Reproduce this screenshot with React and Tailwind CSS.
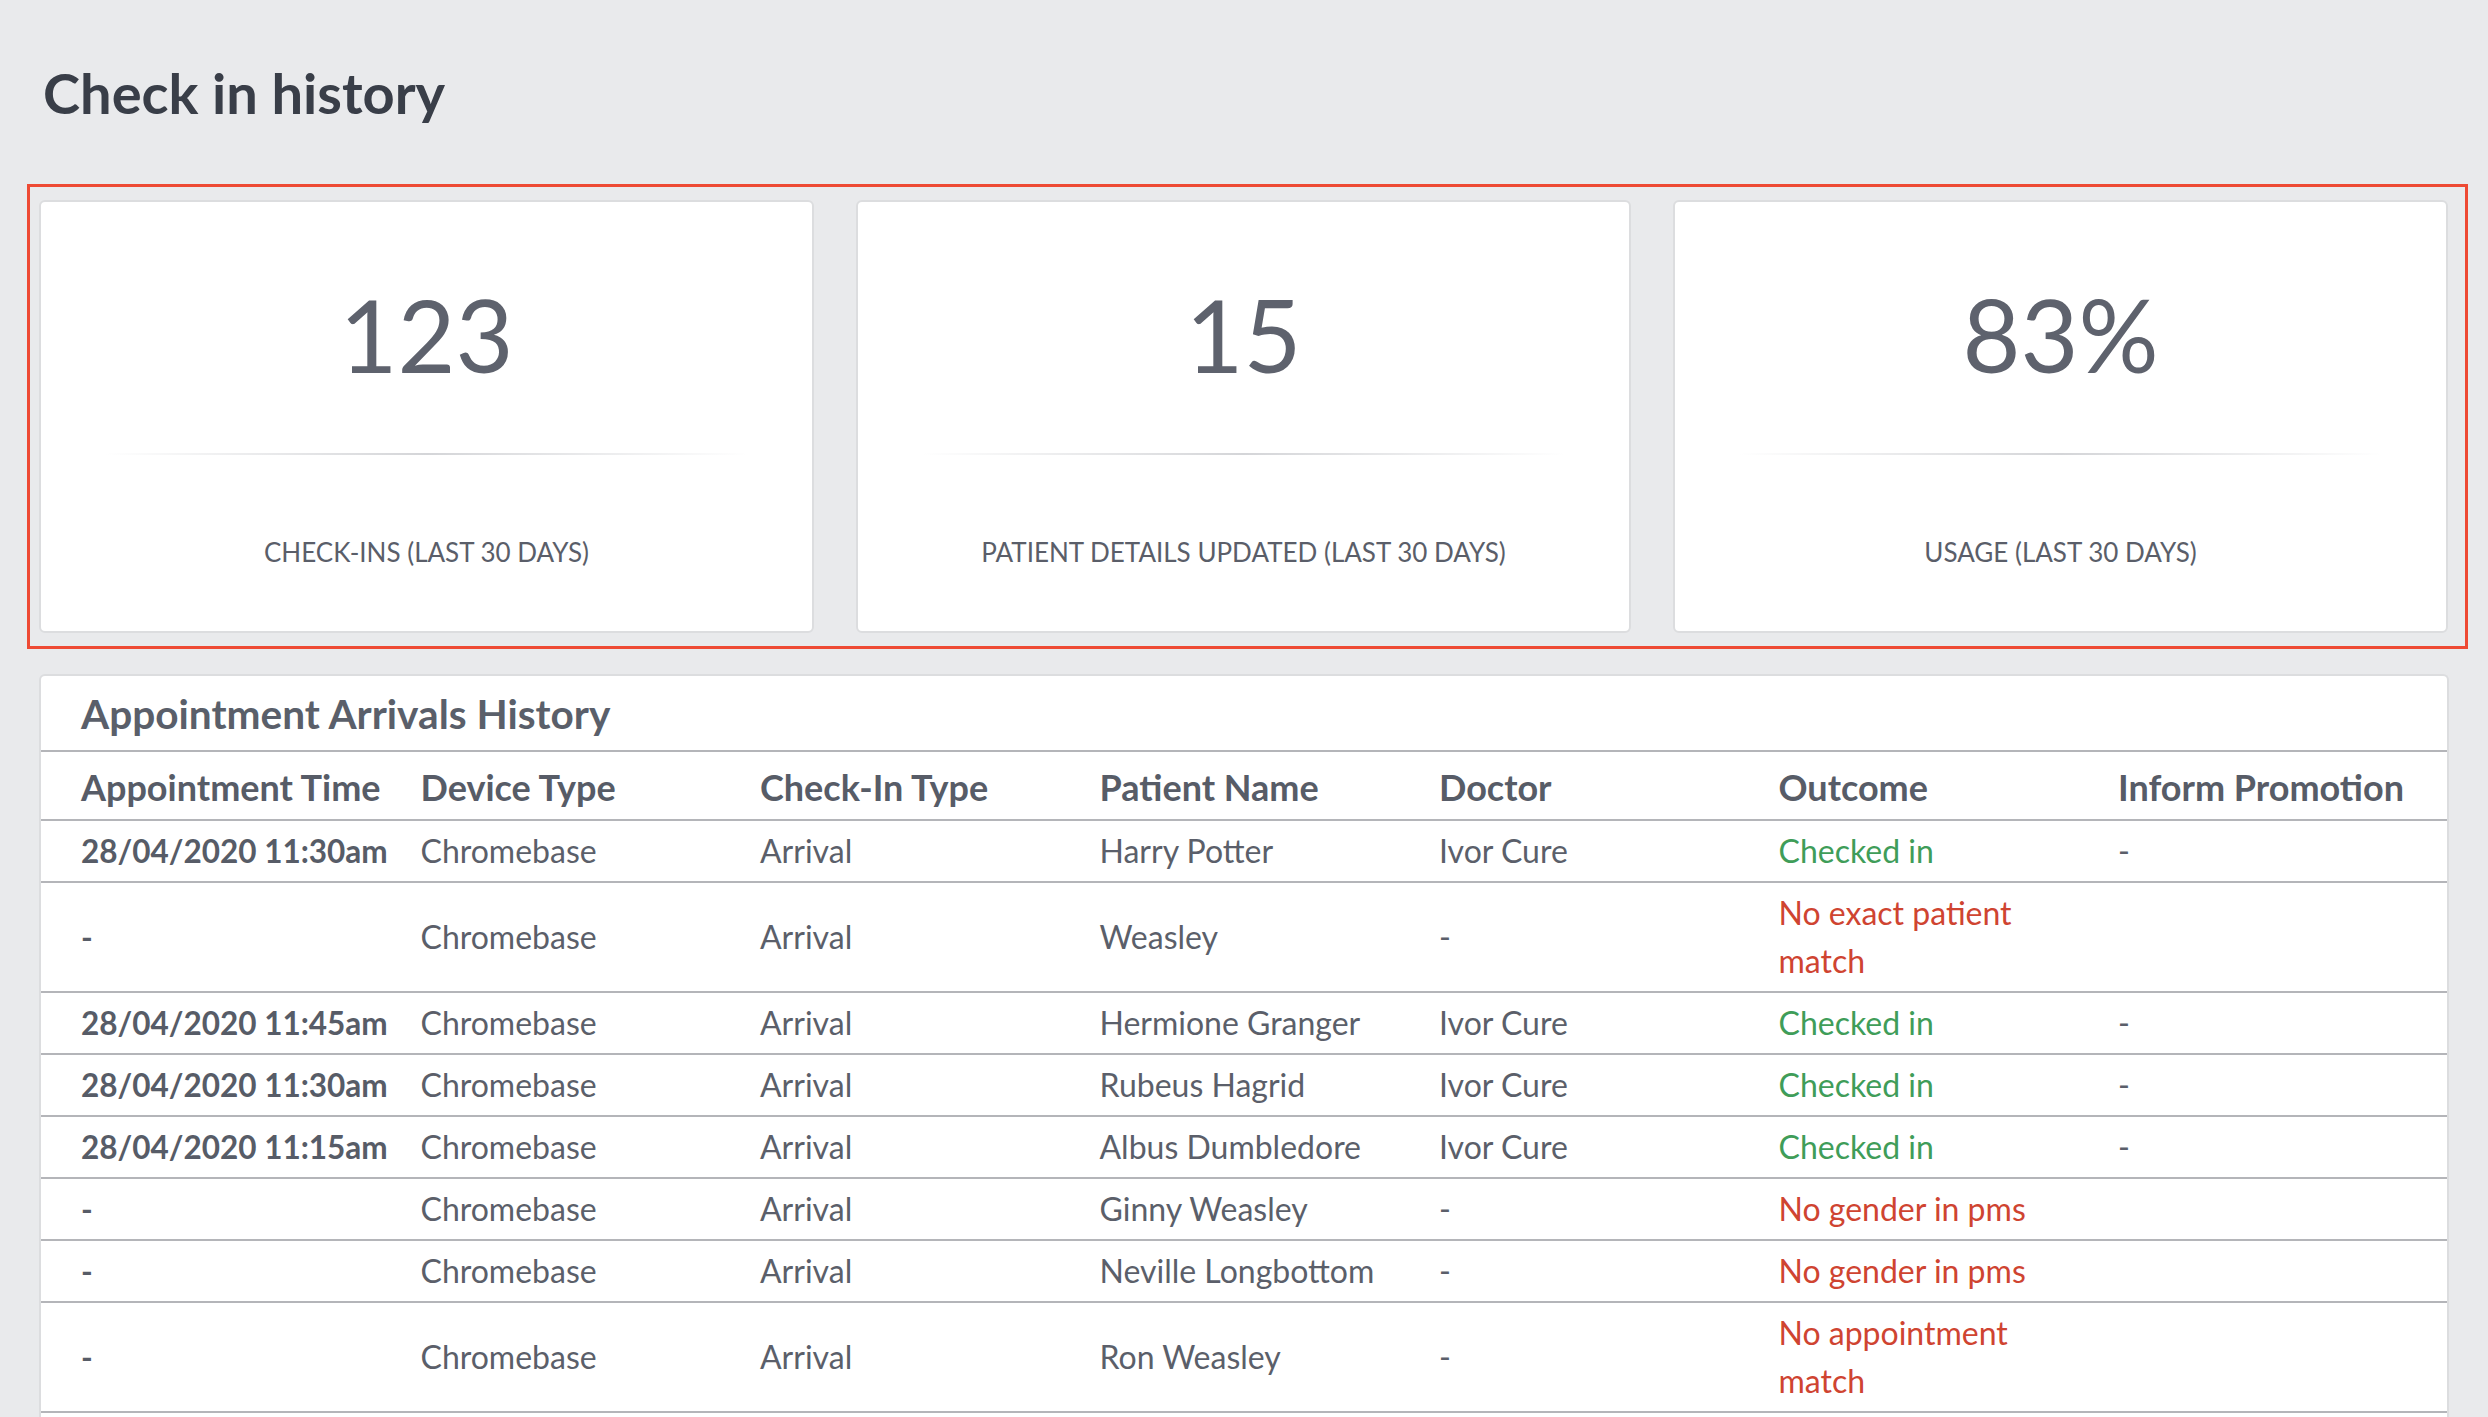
const stats = [
  { value: '123', label: 'CHECK-INS (LAST 30 DAYS)' },
  { value: '15', label: 'PATIENT DETAILS UPDATED (LAST 30 DAYS)' },
  { value: '83%', label: 'USAGE (LAST 30 DAYS)' },
]

const columns = [
  'Appointment Time',
  'Device Type',
  'Check-In Type',
  'Patient Name',
  'Doctor',
  'Outcome',
  'Inform Promotion',
]

const rows = [
  { time: '28/04/2020 11:30am', device: 'Chromebase', type: 'Arrival', patient: 'Harry Potter', doctor: 'Ivor Cure', outcome: 'Checked in', ok: true, promo: '-' },
  { time: '-', device: 'Chromebase', type: 'Arrival', patient: 'Weasley', doctor: '-', outcome: 'No exact patient match', ok: false, promo: '' },
  { time: '28/04/2020 11:45am', device: 'Chromebase', type: 'Arrival', patient: 'Hermione Granger', doctor: 'Ivor Cure', outcome: 'Checked in', ok: true, promo: '-' },
  { time: '28/04/2020 11:30am', device: 'Chromebase', type: 'Arrival', patient: 'Rubeus Hagrid', doctor: 'Ivor Cure', outcome: 'Checked in', ok: true, promo: '-' },
  { time: '28/04/2020 11:15am', device: 'Chromebase', type: 'Arrival', patient: 'Albus Dumbledore', doctor: 'Ivor Cure', outcome: 'Checked in', ok: true, promo: '-' },
  { time: '-', device: 'Chromebase', type: 'Arrival', patient: 'Ginny Weasley', doctor: '-', outcome: 'No gender in pms', ok: false, promo: '' },
  { time: '-', device: 'Chromebase', type: 'Arrival', patient: 'Neville Longbottom', doctor: '-', outcome: 'No gender in pms', ok: false, promo: '' },
  { time: '-', device: 'Chromebase', type: 'Arrival', patient: 'Ron Weasley', doctor: '-', outcome: 'No appointment match', ok: false, promo: '' },
]

function StatCard({ value, label }) {
  return (
    <div className="h-[433px] bg-white border-2 border-[#dcdddf] rounded-md flex flex-col items-stretch">
      <div className="mt-[82px] text-center text-[100px] leading-none text-[#5e626d]">{value}</div>
      <div className="mt-[69px] mx-[64px] h-[2px] bg-linear-to-r from-transparent via-[#d4d5d8] to-transparent" />
      <div className="mt-[84px] text-center text-[26px] leading-none text-[#5a5e69]">{label}</div>
    </div>
  )
}

export default function App() {
  return (
    <div className="min-h-screen bg-[#e9eaec] font-['Lato','Liberation_Sans',sans-serif] pt-[59px] pb-0 overflow-hidden">
      <h1 className="ml-[43px] text-[56px] leading-[1.2] font-bold text-[#393e48]">Check in history</h1>

      {/* Stats */}
      <div className="mt-[58px] ml-[27px] mr-[20px] border-[3px] border-[#ee4a34] pl-[9px] pr-[17px] py-[13px]">
        <div className="grid grid-cols-3 gap-[42px]">
          {stats.map((s) => (
            <StatCard key={s.label} value={s.value} label={s.label} />
          ))}
        </div>
      </div>

      {/* Arrivals table */}
      <div className="mt-[25px] mx-[39px] bg-white border-2 border-b-0 border-[#dcdddf] rounded-t-md pb-[20px]">
        <h2 className="pl-[40px] h-[76px] pt-[3px] flex items-center text-[40.6px] font-bold text-[#5a5f6a] border-b-2 border-[#b4b5b9]">
          Appointment Arrivals History
        </h2>
        <table className="w-full table-fixed border-collapse text-[32px] leading-[48px] text-[#5b5f6a]">
          <colgroup>
            <col className="w-[339.5px]" />
            <col className="w-[339.5px]" />
            <col className="w-[339.5px]" />
            <col className="w-[339.5px]" />
            <col className="w-[339.5px]" />
            <col className="w-[339.5px]" />
            <col />
          </colgroup>
          <thead>
            <tr className="border-b-2 border-[#b4b5b9]">
              {columns.map((c) => (
                <th key={c} className="pl-[40px] pt-[11px] pb-[8px] text-left font-bold text-[36px] text-[#575c67] whitespace-nowrap">
                  {c}
                </th>
              ))}
            </tr>
          </thead>
          <tbody>
            {rows.map((r, i) => (
              <tr key={i} className="border-b-2 border-[#b4b5b9]">
                <td className="pl-[40px] py-[6px] font-bold text-[31.5px] text-[#575c67] whitespace-nowrap">{r.time}</td>
                <td className="pl-[40px] py-[6px]">{r.device}</td>
                <td className="pl-[40px] py-[6px]">{r.type}</td>
                <td className="pl-[40px] py-[6px]">{r.patient}</td>
                <td className="pl-[40px] py-[6px]">{r.doctor}</td>
                <td className={'pl-[40px] py-[6px] ' + (r.ok ? 'text-[#3f9d59]' : 'text-[#cf4431]')}>{r.outcome}</td>
                <td className="pl-[40px] py-[6px]">{r.promo}</td>
              </tr>
            ))}
          </tbody>
        </table>
      </div>
    </div>
  )
}
